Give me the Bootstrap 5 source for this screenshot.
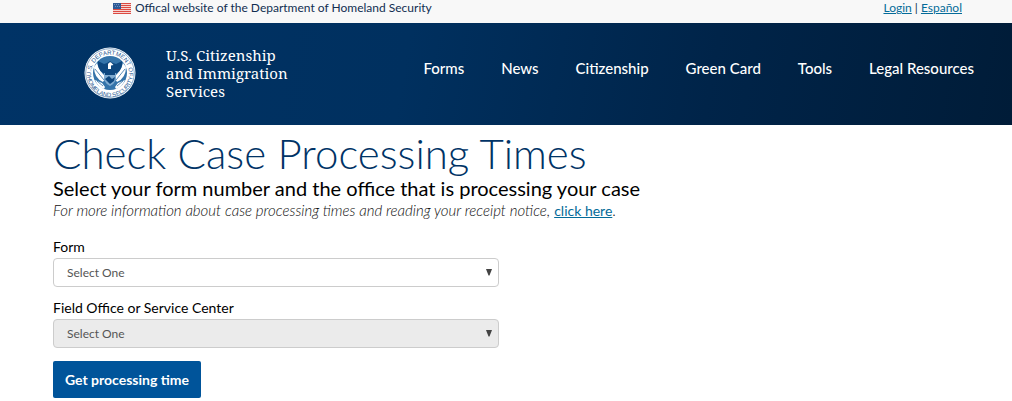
<!DOCTYPE html>
<html lang="en">
<head>
<meta charset="utf-8">
<meta name="viewport" content="width=device-width, initial-scale=1">
<title>Check Case Processing Times</title>
<link href="https://cdn.jsdelivr.net/npm/bootstrap@5.3.0/dist/css/bootstrap.min.css" rel="stylesheet">
<style>
  body { font-family: Lato, "Open Sans", sans-serif; color: #000; background: #fff; }
  .gov-bar { background: #f8f8f8; color: #112e51; font-size: 12px; line-height: 16px; padding: 0 50px 7px 113px; }
  .gov-bar a, .hint a { color: #046b99; }
  .site-head { background: linear-gradient(100deg, #003366 0%, #00305f 40%, #002449 70%, #001c38 100%); padding: 22px 38px 24px 84px; }
  .brand-link { gap: 30px; }
  .brand-name { font: 15px/18px "Noto Serif", "Liberation Serif", serif; color: #fff; }
  .main-nav { gap: 37px; font-size: 15px; line-height: 20px; padding-top: 13px; }
  .main-nav a { color: #fff; font-weight: 500; text-decoration: none; white-space: nowrap; }
  main { padding: 5px 53px 0; }
  h1 { font-size: 42px; line-height: 46px; font-weight: 300; color: #003366; }
  .lede { font-size: 20px; line-height: 24px; }
  .hint { font-size: 15px; line-height: 20px; font-weight: 300; color: #111; margin-bottom: 16px; }
  .hint a { font-size: 14px; font-weight: 400; }
  .case-form { max-width: 446px; }
  .field { margin-bottom: 11px; }
  .case-form label { font-size: 14px; line-height: 20px; margin-bottom: 1px; }
  .case-form .form-select { height: 29px; padding: 0 32px 0 13px; font-size: 12px; color: #555; border: 1px solid #ccc; border-radius: 4px;
    background-image: url("data:image/svg+xml,%3Csvg xmlns='http://www.w3.org/2000/svg' viewBox='0 0 6 7'%3E%3Cpath fill='%23444' d='M0 0h6L3.500 6.500h-1z'/%3E%3C/svg%3E");
    background-size: 6px 7px; background-position: right 6px center; }
  .case-form .form-select:disabled { background-color: #ebebeb; }
  .btn-go { background: #00549a; color: #fff; font-size: 14px; line-height: 19px; font-weight: 700; padding: 9px 12px; border: 0; border-radius: 2px; margin-top: 2px; }
</style>
</head>
<body>
<div class="gov-bar d-flex justify-content-between">
  <div class="d-flex align-items-center">
    <svg class="me-1" width="18" height="11" viewBox="0 0 18 11" aria-hidden="true">
      <path fill="#f6d5d2" d="M0 0h18v11H0z"/>
      <path fill="#dc4a42" d="M0 0h18v1H0zM0 2h18v1H0zM0 4h18v1H0zM0 6h18v1H0zM0 8h18v1H0zM0 10h18v1H0z"/>
      <path fill="#2d5a96" d="M0 0h8v6H0z"/>
      <path fill="#6f8fbb" d="M1 1h1v1H1zM3 1h1v1H3zM5 1h1v1H5zM2 3h1v1H2zM4 3h1v1H4zM6 3h1v1H6z"/>
    </svg>
    <span>Offical website of the Department of Homeland Security</span>
  </div>
  <div><a href="#">Login</a> | <a href="#">Español</a></div>
</div>
<header class="site-head d-flex align-items-start justify-content-between">
  <a href="#" class="brand-link d-flex align-items-center text-decoration-none">
    <svg width="52" height="56" viewBox="0 0 52 56" role="img" aria-label="Department of Homeland Security seal">
      <defs><path id="ringTop" d="M7.500 33A19 19 0 1 1 44.500 33"/><path id="ringBottom" d="M3 29A23 23 0 0 0 49 29"/></defs>
      <circle cx="26" cy="28" r="25.500" fill="#fff"/>
      <circle cx="26" cy="28" r="24.300" fill="none" stroke="#5b87b2" stroke-width=".7"/>
      <g font-family="Liberation Sans, sans-serif" font-size="6" fill="#1d5590" text-anchor="middle">
        <text><textPath href="#ringTop" startOffset="50%">U.S. DEPARTMENT OF</textPath></text>
        <text><textPath href="#ringBottom" startOffset="50%">HOMELAND SECURITY</textPath></text>
      </g>
      <circle cx="26" cy="28" r="17" fill="#3474aa"/>
      <path fill="#fff" d="M10 22l3-4q2 8 9 14l-3 5q-9-4-9-15zM42 22l-3-4q-2 8-9 14l3 5q9-4 9-15z"/>
      <path fill="#0d477f" d="M14 16l6 3 3-1 3-2 3 2 3 1 6-3q1 8-5 12l-4 2h-6l-4-2q-6-4-5-12z"/>
      <path fill="#fff" d="M24 19q2-3 4-.5l1.500 1.500-2.500.5V24h-3z"/>
      <path fill="#7fabd0" d="M20 28h12v7q-2 4-6 6-4-2-6-6z"/>
      <path fill="#0d477f" d="M21 27h10v3H21zM21 34l4-3 3 3 3-2-1 4-4 3-3-3z"/>
      <path fill="#fff" d="M11 35l7 3 3 4-1 2q-6-2-9-9zM41 35l-7 3-3 4 1 2q6-2 9-9z"/>
      <path fill="none" stroke="#3474aa" stroke-width=".8" d="M13 36l6 5M39 36l-6 5M11 24l9 11M41 24l-9 11"/>
    </svg>
    <span class="brand-name">U.S. Citizenship<br>and Immigration<br>Services</span>
  </a>
  <nav class="main-nav d-flex" aria-label="Main">
    <a href="#">Forms</a><a href="#">News</a><a href="#">Citizenship</a><a href="#">Green Card</a><a href="#">Tools</a><a href="#">Legal Resources</a>
  </nav>
</header>
<main>
  <h1 class="mb-0">Check Case Processing Times</h1>
  <p class="lede mb-0">Select your form number and the office that is processing your case</p>
  <p class="hint"><em>For more information about case processing times and reading your receipt notice,</em> <a href="#">click here</a>.</p>
  <form class="case-form">
    <div class="field"><label for="formType" class="d-block">Form</label>
      <select id="formType" class="form-select"><option>Select One</option></select></div>
    <div class="field"><label for="office" class="d-block">Field Office or Service Center</label>
      <select id="office" class="form-select" disabled><option>Select One</option></select></div>
    <button type="button" class="btn btn-go">Get processing time</button>
  </form>
</main>
<script src="https://cdn.jsdelivr.net/npm/bootstrap@5.3.0/dist/js/bootstrap.bundle.min.js"></script>
</body>
</html>
